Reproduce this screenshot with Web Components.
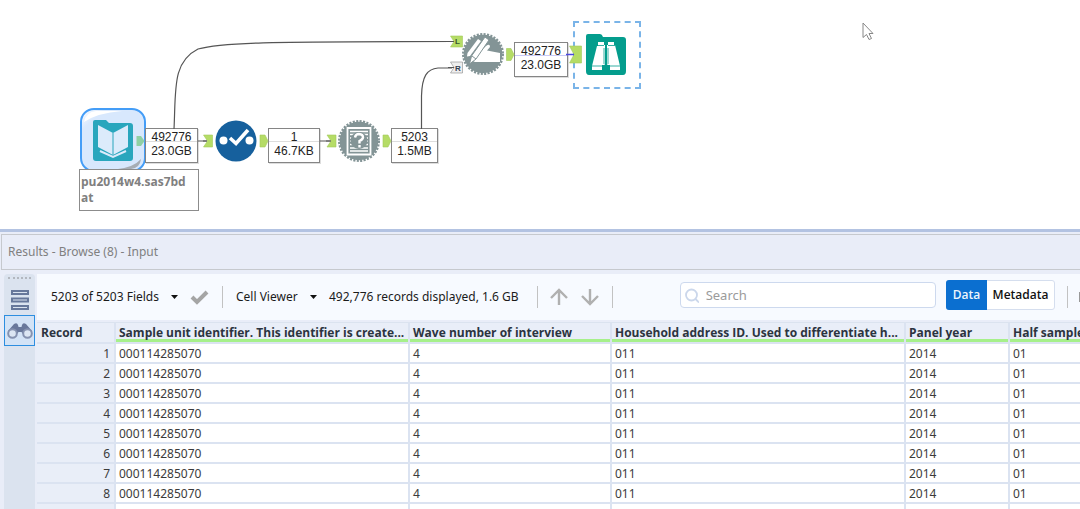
<!DOCTYPE html>
<html lang="en">
<head>
<meta charset="utf-8">
<title>Results - Browse</title>
<style>
html, body { margin: 0; height: 100%; }
body { overflow: hidden; background: #fff; color: #222; font: 12px/16px "Noto Sans", "Open Sans", sans-serif; }
</style>
</head>
<body>
<designer-app></designer-app>
<script>
const define = (name, html, setup) => customElements.define(name, class extends HTMLElement {
  constructor() {
    super();
    const t = document.createElement('template');
    t.innerHTML = html;
    this.attachShadow({ mode: 'open' }).append(t.content.cloneNode(true));
    if (setup) setup(this.shadowRoot, this);
  }
});

define('size-label', `
<style>
:host { display: block; box-sizing: border-box; border: 1px solid #858585; padding: 1px 4px;
  background: linear-gradient(var(--wire, #ddd), var(--wire, #ddd)) 0 12px / 100% 1px no-repeat #fff;
  font: 12px/14px "Liberation Sans", sans-serif; color: #222; text-align: center; white-space: nowrap;
  height: 35px; box-shadow: 1px 1px 0 #ddd; }
</style><slot></slot>`);

define('file-caption', `
<style>
:host { display: block; box-sizing: border-box; border: 1px solid #8c8c8c; background: #fff; padding: 4px 1px;
  height: 42px; width: 120px; font: bold 12px/16px "Open Sans", sans-serif; color: #808080; }
</style><slot></slot>`);

define('input-tool', `
<style>:host { display: block } svg { display: block }</style>
<svg width="66" height="64" viewBox="0 0 66 64">
  <defs><linearGradient id="g" x1="0" y1="0" x2="1" y2="1"><stop offset="0" stop-color="#fff"/><stop offset=".18" stop-color="#d8e8fd"/><stop offset="1" stop-color="#d8e8fd"/></linearGradient></defs>
  <rect x="1" y="1" width="64" height="62" rx="13" fill="url(#g)" stroke="#449df7" stroke-width="2"/>
  <path d="M4 14Q6 4 16 3H42Q17 5 4 14Z" fill="#fff"/>
  <path d="M61 51Q54 59 38 61H51Q60 60 61 51Z" fill="#a7adb4"/>
  <path d="M15 12H26L29 15H50Q53 15 53 18V50Q53 53 50 53H16Q13 53 13 50V14Q13 12 15 12Z" fill="#29a6bd"/>
  <path d="M18 17L33 25V47L18 39ZM48 17V39L33 47V25Z" fill="#dcebfb"/>
  <path d="M33 25V47" stroke="#29a6bd"/>
  <path d="M20 43L33 49L46 43" fill="none" stroke="#dcebfb" stroke-width="2"/>
</svg>`);

define('select-tool', `
<style>:host { display: block } svg { display: block }</style>
<svg width="42" height="42" viewBox="0 0 42 42">
  <circle cx="21" cy="21" r="20.500" fill="#16609d"/>
  <circle cx="8.500" cy="20.500" r="4" fill="#fff"/><circle cx="34.500" cy="20.500" r="4" fill="#fff"/>
  <path d="M15 18L21 23.500L33 10" fill="none" stroke="#fff" stroke-width="3.600"/>
</svg>`);

const gear = '<circle cx="21" cy="21" r="19.300" fill="#839496"/><circle cx="21" cy="21" r="19.800" fill="none" stroke="#839496" stroke-width="2.400" stroke-dasharray="2.100 1.355"/>';
define('field-info-tool', `
<style>:host { display: block } svg { display: block }</style>
<svg width="42" height="42" viewBox="0 0 42 42">${gear}
  <path d="M9.500 8H32.500M9.500 34.500H32.500M9.500 7V35.500M32.500 7V35.500" stroke="#fff" stroke-width="1.800"/>
  <path d="M12 11.500H30M12 14.500H30M12 18H15M27 18H30M12 21H15M27 21H30M12 24.500H15M27 24.500H30M12 28H30M12 31H30" stroke="#fff" stroke-width="1.600"/>
  <circle cx="21" cy="20.500" r="8.500" fill="#839496"/>
  <path d="M17 17.500Q17.500 14 21 14Q25 14.200 25 17.500Q24.700 19.500 21.500 21V23.500M21.500 25V27.500" fill="none" stroke="#fff" stroke-width="2.400"/>
</svg>`);

define('rename-tool', `
<style>:host { display: block } svg { display: block }</style>
<svg width="42" height="42" viewBox="0 0 42 42">${gear}
  <path d="M12 24L24 13Q28 10 28 14L25 17.500L38 20V29H13Q9 28 12 24Z" fill="#fff"/>
  <path d="M23 4L27 7L14 26L7.500 31L9.500 23Z" fill="#fff" stroke="#839496"/>
  <path d="M10 23L14 26" stroke="#839496"/>
  <path d="M16 6L19 8L8 23L5 23.500L5.500 20Z" fill="#fff"/>
</svg>`);

define('browse-tool', `
<style>
:host { display: block; box-sizing: border-box; width: 68px; height: 68px; padding: 11px; border: 2px dashed #7ab4e8; }
svg { display: block }
</style>
<svg width="40" height="41" viewBox="0 0 40 41">
  <path d="M2 0H14Q16 0 17 3H37Q40 3 40 6V37Q40 41 37 41H3Q0 41 0 37V2Q0 0 2 0Z" fill="#049d8d"/>
  <path d="M12 8H18V11H19V30Q19 31 18 31H16V36H6V32L11 12H12ZM22 8H28V11H29L34 32V36H24V31H22Q21 31 21 30V11H22Z" fill="#fff"/>
  <path d="M11 11.500H18M22 11.500H29M6 32H16M24 32H34M18 30V14M22 30V14" stroke="#049d8d" stroke-width=".8"/>
</svg>`);

define('workflow-canvas', `
<style>
:host { display: block; position: relative; height: 229px; overflow: hidden; background: #fff; }
.wires { position: absolute; left: 0; top: 0; }
.node { position: absolute; }
.selected { --wire: #c9c9f7; }
</style>
<input-tool class="node" style="left:80px;top:108px"></input-tool>
<file-caption class="node" style="left:79px;top:169px">pu2014w4.sas7bd<br>at</file-caption>
<size-label class="node" style="left:145px;top:128px;width:53px">492776<br>23.0GB</size-label>
<select-tool class="node" style="left:215px;top:120px"></select-tool>
<size-label class="node" style="left:268px;top:128px;width:52px">1<br>46.7KB</size-label>
<field-info-tool class="node" style="left:338px;top:120px"></field-info-tool>
<size-label class="node" style="left:391px;top:128px;width:47px">5203<br>1.5MB</size-label>
<rename-tool class="node" style="left:462px;top:33px"></rename-tool>
<size-label class="node selected" style="left:514px;top:42px;width:54px">492776<br>23.0GB</size-label>
<browse-tool class="node" style="left:573px;top:21px"></browse-tool>
<svg class="wires" width="900" height="229" viewBox="0 0 900 229" font-family="Liberation Sans, sans-serif">
  <g fill="none" stroke="#555" stroke-width="1.200">
    <path d="M174 129C176 90 172 62 198 49C225 41 300 42 452 41.500"/>
    <path d="M421.500 129V96C422 76 427 69 438 68H452"/>
    <path d="M198 141H207M320 141H331"/>
  </g>
  <g fill="#b5dc66" stroke="#a3c95a" stroke-width=".6">
    <path d="M136.500 136H141L144.500 141L141 146H136.500Z" fill="#8fd0a4" stroke="none"/>
    <path d="M260 135H265L268 141L265 147H260Z"/>
    <path d="M383 135H388L391 141L388 147H383Z"/>
    <path d="M506.500 48.500H511L514 54.500L511 60.500H506.500Z"/>
    <path d="M203.500 135H212.500V147H203.500L207.500 141Z"/>
    <path d="M327 135H336V147H327L331 141Z"/>
    <path d="M569.500 46H581.500V63H569.500L574 54.500Z"/>
    <path d="M450.500 36H462.500V47H450.500L454 41.500Z"/>
    <path d="M450.500 62H462.500V73H450.500L454 67.500Z" fill="#eee" stroke="#888"/>
  </g>
  <path d="M566 54.500H574" stroke="#4b49e0" stroke-width="1.500"/>
  <path d="M203 141H207M326 141H331M448 41.500H454M448 67.500H454" stroke="#555"/>
  <text x="455" y="44" font-size="8" font-weight="bold" fill="#36542f">L</text>
  <text x="455" y="71" font-size="8" font-weight="bold" fill="#345">R</text>
  <path d="M863 23V37.500L866.500 34.500L869 39.500L871.500 38.500L869 33.500H873Z" fill="#fff" stroke="#888"/>
</svg>`);

define('side-rail', `
<style>
:host { display: flex; flex-direction: column; width: 31px; flex: none; background: #dbe3ef; border-radius: 4px 4px 0 0; margin: 4px 2px 0 4px; }
.grip { height: 0; margin: 3px 4px 6px; border-top: 2px dotted #b2b7bf; }
button { box-sizing: border-box; display: grid; place-items: center; width: 31px; height: 30px; padding: 0; border: 0; background: none; }
button.on { height: 31px; border: 1px solid #2d8ee0; background: #d3e3f6; }
svg { display: block }
</style>
<div class="grip"></div>
<button aria-label="Messages"><svg width="20" height="24" viewBox="0 0 20 24" fill="none" stroke="#68789b" stroke-width="2"><path d="M2 3H18V6H2ZM2 10.500H18V13.500H2ZM2 18H18V21H2Z"/></svg></button>
<button class="on" aria-label="Browse"><svg width="26" height="18" viewBox="0 0 26 18"><path d="M7 2Q10 0 11 3L11.500 5H14.500L15 3Q16 0 19 2L25 9V12H16L14.500 10H11.500L10 12H1V9Z" fill="#68789b"/><circle cx="5.500" cy="11.500" r="4.300" fill="#dce6f3" stroke="#8592b0" stroke-width="2"/><circle cx="20.500" cy="11.500" r="4.300" fill="#dce6f3" stroke="#8592b0" stroke-width="2"/></svg></button>`);

define('menu-select', `
<style>
:host { display: flex; align-items: center; flex: none; gap: 12px; }
select { appearance: none; border: 0; padding: 0; margin: 0; background: none; font: 12px/16px "Noto Sans", sans-serif; color: #1b1b1b; }
svg { display: block }
</style>
<select><option></option></select><svg width="7" height="4"><path d="M0 0H7L3.500 4Z" fill="#111"/></svg>`,
(root, host) => {
  root.querySelector('option').textContent = host.getAttribute('value');
  root.querySelector('select').setAttribute('aria-label', host.getAttribute('label'));
});

define('results-toolbar', `
<style>
:host { display: flex; align-items: center; box-sizing: border-box; height: 46px; padding-left: 14px; background: #f7faff; overflow: hidden; white-space: nowrap; color: #1b1b1b; }
button { border: 0; padding: 0; background: none; flex: none; font: 12px/16px "Noto Sans", sans-serif; }
svg { display: block }
.sep { flex: none; width: 1px; height: 22px; background: #c2c2c2; }
.check { margin: 0 13px 0 12px; }
.cell { margin: 0 12px 0 13px; }
.count { flex: none; margin-right: 18px; }
.up { margin: 0 13px 0 12px; }
.down { margin-right: 13px; }
.search { box-sizing: border-box; display: flex; align-items: center; gap: 7px; flex: 1; min-width: 0; height: 26px; margin: 0 10px 4px 67px; padding: 0 4px; border: 1px solid #cdd9ee; border-radius: 4px; background: #fff; }
.search input { flex: 1; min-width: 0; border: 0; outline: 0; padding: 0; background: none; font: 13px/18px "Noto Sans", sans-serif; }
.search input::placeholder { color: #9b9b9b; }
.tabs { display: flex; flex: none; height: 30px; box-sizing: border-box; margin: 0 12px 4px 0; border: 1px solid #d5deee; border-radius: 3px; background: #fff; }
.tabs button { width: 67px; font-family: "Open Sans", sans-serif; font-weight: 600; color: #111; }
.tabs .on { width: 41px; margin: -1px 0 -1px -1px; background: #0b6fd0; color: #eef5fc; border-radius: 3px 0 0 3px; }
.tail { margin-right: 11px; }
.more { flex: none; width: 1px; height: 10px; background: #999; }
</style>
<menu-select label="Fields" value="5203 of 5203 Fields"></menu-select>
<button class="check" aria-label="Apply"><svg width="19" height="16" viewBox="0 0 19 16"><path d="M2 8L7 13L17 3" fill="none" stroke="#a5a5a5" stroke-width="4"/></svg></button>
<span class="sep"></span>
<menu-select class="cell" label="Viewer" value="Cell Viewer"></menu-select>
<span class="count">492,776 records displayed, 1.6 GB</span>
<span class="sep"></span>
<button class="up" aria-label="Previous"><svg width="18" height="18" viewBox="0 0 18 18" fill="none" stroke="#b0b0b0" stroke-width="2.400"><path d="M9 17V2M1 10L9 2L17 10"/></svg></button>
<button class="down" aria-label="Next"><svg width="18" height="18" viewBox="0 0 18 18" fill="none" stroke="#b0b0b0" stroke-width="2.400"><path d="M9 1V16M1 8L9 16L17 8"/></svg></button>
<span class="sep"></span>
<label class="search"><svg width="14" height="15" viewBox="0 0 14 15" fill="none" stroke="#cbd7eb" stroke-width="1.800"><circle cx="6.500" cy="7" r="5.500"/><path d="M10.500 11L14 14.500"/></svg><input type="text" placeholder="Search" aria-label="Search"></label>
<span class="tabs"><button class="on">Data</button><button>Metadata</button></span>
<span class="sep tail"></span><span class="more"></span>`);

define('data-grid', `
<style>
:host { display: block; overflow: hidden; border-top: 1px solid #dbe3ef; margin-top: 2px; }
table { border-collapse: separate; border-spacing: 0; table-layout: fixed; width: 100%; }
th, td { box-sizing: border-box; height: 20px; padding: 1px 4px 0 3px; border: 0 solid #dbe3f1; border-width: 0 2px 2px 0; font: 12px/16px "Noto Sans", sans-serif; text-align: left; white-space: nowrap; overflow: hidden; color: #3b3b3b; background: #fff; }
thead th { height: 21px; padding: 1px 0 0 3px; font: bold 12px/16px "Open Sans", sans-serif; color: #2c3440; background: linear-gradient(#a6f08a, #a6f08a) 0 100% / 100% 3px no-repeat #e9eef8; }
thead th:first-child { padding-left: 4px; background: #e9eef8; }
tbody th { text-align: right; background: #e9eef8; }
tr > :last-child { border-right: 0; padding-right: 0; }
.rec { width: 79px } .id { width: 294px } .wave { width: 202px } .house { width: 294px } .year { width: 104px }
</style>
<table>
<colgroup><col class="rec"><col class="id"><col class="wave"><col class="house"><col class="year"><col></colgroup>
<thead><tr><th scope="col">Record</th><th scope="col">Sample unit identifier. This identifier is create...</th><th scope="col">Wave number of interview</th><th scope="col">Household address ID. Used to differentiate h...</th><th scope="col">Panel year</th><th scope="col">Half sample</th></tr></thead>
<tbody></tbody>
</table>`, root => {
  const body = root.querySelector('tbody');
  for (let n = 1; n <= 8; n++)
    body.insertAdjacentHTML('beforeend', `<tr><th scope="row">${n}</th><td>000114285070</td><td>4</td><td>011</td><td>2014</td><td>01</td></tr>`);
  body.insertAdjacentHTML('beforeend', '<tr><th scope="row"></th><td></td><td></td><td></td><td></td><td></td></tr>');
});

define('results-pane', `
<style>
:host { display: flex; flex-direction: column; flex: 1; min-height: 0; border-top: 3px solid #b3c3e2; background: #e9edf8; }
header { box-sizing: border-box; height: 36px; margin: 2px 0 0 1px; padding: 9px 6px; border: 1px solid #c6c9ce; border-right: 0; color: #808080; }
.body { display: flex; flex: 1; min-height: 0; }
main { flex: 1; min-width: 0; padding-top: 4px; }
</style>
<header>Results - Browse (8) - Input</header>
<div class="body"><side-rail></side-rail><main><results-toolbar></results-toolbar><data-grid></data-grid></main></div>`);

define('designer-app', `
<style>:host { display: flex; flex-direction: column; height: 100vh; overflow: hidden }</style>
<workflow-canvas></workflow-canvas><results-pane></results-pane>`);
</script>
</body>
</html>
